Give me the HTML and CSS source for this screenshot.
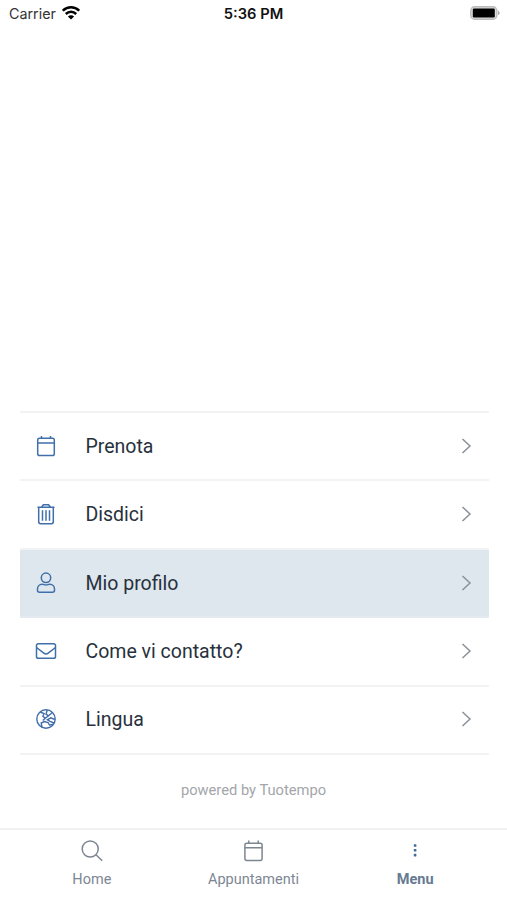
FILE: index.html
```html
<!DOCTYPE html>
<html lang="it">
<head>
<meta charset="utf-8">
<title>Menu</title>
<link rel="stylesheet" href="styles.css">
</head>
<body>
<div class="screen">
  <header class="status">
    <div class="status-left"><span class="carrier">Carrier</span>
      <svg class="wifi" width="18" height="14" viewBox="0 0 18 14" fill="none" stroke="#000" stroke-width="2.5"><path d="M.8 4.700C5.500.1 12.500.1 17.200 4.700M3.800 8c3-2.900 7.400-2.900 10.400 0"/><path d="M9 13.500 5.900 10.400c1.800-1.700 4.400-1.700 6.200 0z" fill="#000" stroke="none"/></svg>
    </div>
    <span class="time">5:36 PM</span>
    <svg class="battery" width="30" height="14" viewBox="0 0 30 14"><rect x=".8" y=".8" width="26" height="12.400" rx="3.800" fill="#ddd" stroke="#bbb" stroke-width="1.400"/><rect x="2.800" y="2.600" width="22" height="8.800" rx="1.200"/><path d="M28 4.700c2.200.7 2.200 3.700 0 4.400z" fill="#aaa"/></svg>
  </header>
  <main class="content">
    <nav class="menu">
      <a class="row"><svg class="icon" viewBox="0 0 22 22"><rect x="2.700" y="3.200" width="16.600" height="17.300" rx="1.800"/><path d="M2.700 8h16.600M6.500 3.200V1M15.500 3.200V1"/></svg><span class="label">Prenota</span><svg class="chevron" viewBox="0 0 10 18"><path d="m1 2 7.500 7L1 16"/></svg></a>
      <a class="row"><svg class="icon" viewBox="0 0 22 22"><path d="M2.500 4.300h17M3.700 4.300v14.500q0 1.900 1.900 1.900h10.800q1.900 0 1.900-1.900V4.300M6.500 4.300l1.900-2.600h5.200l1.900 2.600M7.500 7.300v10.500M11 7.300v10.500M14.500 7.300v10.500"/></svg><span class="label">Disdici</span><svg class="chevron" viewBox="0 0 10 18"><path d="m1 2 7.500 7L1 16"/></svg></a>
      <a class="row selected"><svg class="icon" viewBox="0 0 22 22"><circle cx="11" cy="5.800" r="4.700"/><path d="M7.200 12.300c1.700 0 2.200.7 3.800.7s2.100-.7 3.800-.7c2.900 0 4.700 2.200 4.700 4.800v1.200q0 2-2 2h-13q-2 0-2-2v-1.200c0-2.600 1.800-4.800 4.700-4.800z"/></svg><span class="label">Mio profilo</span><svg class="chevron" viewBox="0 0 10 18"><path d="m1 2 7.500 7L1 16"/></svg></a>
      <a class="row"><svg class="icon" viewBox="0 0 22 22"><rect x="1.500" y="3.700" width="19" height="14.600" rx="1.900"/><path d="m1.500 7.500 7.300 5.700q2.200 1.700 4.400 0l7.300-5.700"/></svg><span class="label">Come vi contatto?</span><svg class="chevron" viewBox="0 0 10 18"><path d="m1 2 7.500 7L1 16"/></svg></a>
      <a class="row"><svg class="icon globe" viewBox="0 0 22 22"><circle cx="11" cy="11" r="9.200"/><path d="m5.200 4 3.900 1.700-1.200 2.500 2.400 2 3.200-2.400-2.500-1.600 1.200-4M13.500 7.800l3.600-3M10.300 10.200l-2.500 2.300M19.800 11.500l-4-1.700-3.400 2 2.600 1.500 4 1.700M7 19.300l-.8-4.300 3.300-1.500 3.500 1 1.500 2.500 3.500-.5"/></svg><span class="label">Lingua</span><svg class="chevron" viewBox="0 0 10 18"><path d="m1 2 7.500 7L1 16"/></svg></a>
    </nav>
    <p class="powered">powered by Tuotempo</p>
  </main>
  <nav class="tabs">
    <a class="tab"><svg class="tab-icon" viewBox="0 0 24 24"><circle cx="10.200" cy="10" r="8"/><path d="m16 15.800 6.200 6"/></svg><span>Home</span></a>
    <a class="tab"><svg class="tab-icon" viewBox="0 0 24 24"><rect x="3.900" y="4.200" width="17.200" height="17.200" rx="1.800"/><path d="M3.900 8.700h17.200M7.800 4.200V1.500M17.200 4.200V1.500"/></svg><span>Appuntamenti</span></a>
    <a class="tab active"><svg class="tab-icon" viewBox="0 0 24 24"><rect x="10.800" y="5.200" width="2.600" height="2.600" rx=".6"/><rect x="10.800" y="10" width="2.600" height="2.600" rx=".6"/><rect x="10.800" y="14.800" width="2.600" height="2.600" rx=".6"/></svg><span>Menu</span></a>
  </nav>
</div>
</body>
</html>
```
FILE: styles.css
```css
* { box-sizing: border-box; }
body { margin: 0; background: #fff; font-family: Roboto, sans-serif; }
.screen { height: 900px; display: flex; flex-direction: column; overflow: hidden; }
.status {
  height: 28px;
  padding: 0 7px 0 9px;
  display: grid;
  grid-template-columns: 1fr auto 1fr;
  align-items: center;
  color: #111;
  font: 14.300px/28px Inter, sans-serif;
}
.status-left { display: flex; align-items: center; gap: 6px; }
.carrier { color: #333; }
.wifi { margin-top: -2px; }
.time { font-size: 14.700px; font-weight: 600; margin-right: 2px; }
.battery { justify-self: end; margin-top: -2px; }
.content { flex: 1; display: flex; flex-direction: column; justify-content: flex-end; padding: 0 18px 28px 20px; }
.menu { border-top: 2px solid #f2f3f4; }
.row {
  height: 68.400px;
  display: flex;
  align-items: center;
  padding: 0 17.500px 0 15px;
  border-bottom: 2px solid #f2f3f4;
  color: #27313c;
}
.selected { background: #dee6ee; border-color: #e4eaf0; }
.icon { width: 22px; height: 22px; margin: -1px 28.500px 0 0; fill: none; stroke: #416fa9; stroke-width: 1.500; }
.globe { stroke-width: 1.400; }
.label { flex: 1; font-size: 19.500px; line-height: 26px; padding-top: 1px; }
.chevron { width: 11px; height: 18px; margin-top: -1px; fill: none; stroke: #89919a; stroke-width: 1.500; }
.powered { margin: 25px 0 0; padding-right: 2px; color: #a3a6aa; font-size: 14.700px; line-height: 20px; text-align: center; }
.tabs {
  height: 72px;
  padding: 9px 11px 0;
  display: grid;
  grid-template-columns: repeat(3, 1fr);
  border-top: 2px solid #f0f1f2;
}
.tab { display: flex; flex-direction: column; align-items: center; gap: 7px; color: #7d8794; font-size: 14.500px; line-height: 20px; }
.tab-icon { width: 24px; height: 24px; fill: none; stroke: #7d8691; stroke-width: 1.500; }
.active { color: #667a91; font-weight: 700; }
.active .tab-icon { fill: #416b98; stroke: none; }
```
